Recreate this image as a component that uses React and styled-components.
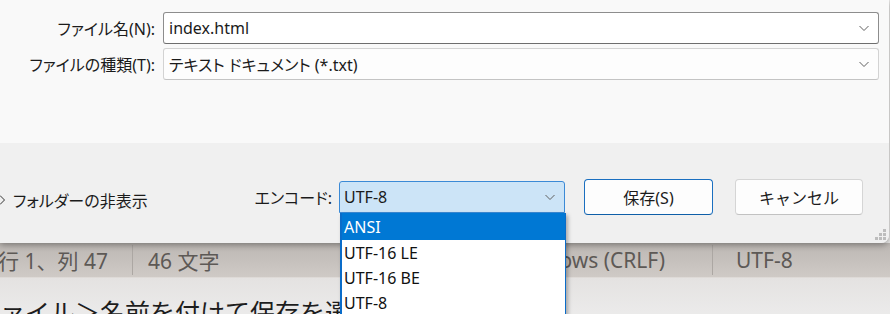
import React from 'react'
import styled, { createGlobalStyle } from 'styled-components'

const Global = createGlobalStyle`
    html, body {
        margin: 0;
        padding: 0;
        overflow: hidden;
    }
    body {
        font-family: "Noto Sans", "Noto Sans CJK JP", sans-serif;
        font-feature-settings: "palt";
    }
`

const Page = styled.div`
    position: relative;
    width: 890px;
    height: 314px;
    overflow: hidden;
    background: #ecebea;
`

const Dialog = styled.div`
    position: relative;
    z-index: 2;
    width: 889px;
    height: 243px;
    display: flex;
    flex-direction: column;
    border-bottom-right-radius: 8px;
    overflow: hidden;
    box-shadow: 0 2px 6px rgba(0, 0, 0, 0.35);
`

const FormArea = styled.div`
    height: 143px;
    box-sizing: border-box;
    padding-top: 12px;
    background-color: #f9f9f9;
    display: grid;
    grid-template-columns: 155px 716px;
    grid-auto-rows: 32px;
    column-gap: 8px;
    row-gap: 4px;
    align-content: start;
`

const Label = styled.label`
    justify-self: end;
    align-self: center;
    font-size: 16px;
    color: #1b1b1b;
    white-space: nowrap;
`

const Field = styled.div`
    display: flex;
    align-items: center;
    justify-content: space-between;
    box-sizing: border-box;
    padding: 0 8px 0 5px;
    font-size: 16px;
    color: #1b1b1b;
    border-radius: 3px;
    background: ${p => (p.$focused ? '#ffffff' : '#fdfdfd')};
    border: 1px solid ${p => (p.$focused ? '#8d8d8d' : '#d3d3d3')};
    border-bottom-color: ${p => (p.$focused ? '#6e6e6e' : '#c4c4c4')};
`

const Chevron = ({ color = '#606060' }) => (
    <svg width="12" height="12" viewBox="0 0 12 12">
        <path d="M1.5 4 L6 8.5 L10.5 4" fill="none" stroke={color} strokeWidth="1" />
    </svg>
)

const ActionBar = styled.div`
    flex: 1;
    box-sizing: border-box;
    padding: 8px 26px 0 0;
    background-color: #f0f0f0;
    display: flex;
    align-items: center;
`

const FolderToggle = styled.div`
    display: flex;
    align-items: center;
    gap: 5px;
    margin-left: -4px;
    margin-top: 6px;
    font-size: 16px;
    color: #1b1b1b;

    svg {
        transform: rotate(-90deg);
    }
`

const Encoding = styled.div`
    margin-left: auto;
    display: flex;
    align-items: center;
    gap: 7px;
    font-size: 16px;
    color: #1b1b1b;
`

const EncodingSelect = styled.div`
    width: 226px;
    height: 32px;
    box-sizing: border-box;
    padding: 0 8px 0 4px;
    display: flex;
    align-items: center;
    justify-content: space-between;
    background: #cce4f7;
    border: 1px solid #3b8ad6;
    border-radius: 3px 3px 0 0;
`

const Button = styled.button`
    width: ${p => p.$width}px;
    height: 36px;
    margin-left: ${p => p.$gap}px;
    font-family: inherit;
    font-size: 16px;
    color: #1b1b1b;
    background: #fdfdfd;
    border-radius: 4px;
    border: 1px solid ${p => (p.$primary ? '#1a6fc0' : '#d5d5d5')};
    border-bottom-color: ${p => (p.$primary ? '#0f5fa8' : '#c2c2c2')};
`

const Grip = styled.div`
    position: absolute;
    right: 3px;
    bottom: 3px;
    display: grid;
    grid-template-columns: repeat(3, 3px);
    gap: 1px;

    i {
        width: 3px;
        height: 3px;
        background: #bdbdbd;
    }
    i.off {
        background: transparent;
    }
`

const StatusBar = styled.div`
    height: 35px;
    box-sizing: border-box;
    display: flex;
    align-items: center;
    background: linear-gradient(#bcb7b3, #cfcac6);
    border-bottom: 1px solid #dedad7;
    font-family: "Noto Sans", "Noto Sans CJK JP", sans-serif;
    font-feature-settings: normal;
    font-size: 21px;
    color: #5d5956;
`

const Cell = styled.div`
    height: 30px;
    width: ${p => p.$width}px;
    flex-shrink: 0;
    box-sizing: border-box;
    display: flex;
    align-items: center;
    justify-content: ${p => (p.$right ? 'flex-end' : 'flex-start')};
    padding: ${p => p.$pad};
    margin-left: ${p => p.$offset || 0}px;
    border-right: ${p => (p.$sep ? '1px solid #aca7a3' : 'none')};
    white-space: nowrap;
`

const Editor = styled.div`
    height: 36px;
    background: linear-gradient(#e4e2e1, #efefef);
    padding-top: 18px;
    font-family: "Noto Sans CJK JP", sans-serif;
    font-feature-settings: normal;
    font-size: 25px;
    line-height: 30px;
    color: #1d1d1d;
    white-space: nowrap;
    text-indent: -25px;
`

const OptionList = styled.ul`
    position: absolute;
    z-index: 3;
    left: 340px;
    top: 213px;
    width: 226px;
    margin: 0;
    padding: 0;
    list-style: none;
    box-sizing: border-box;
    background: #ffffff;
    border: 1px solid #0a6cc9;
    border-top: none;
    border-left-width: 2px;
    box-shadow: 2px 2px 4px rgba(0, 0, 0, 0.3);
`

const Option = styled.li`
    height: ${p => (p.$active ? 27 : 25)}px;
    display: flex;
    align-items: center;
    padding-left: 2px;
    font-size: 16px;
    color: ${p => (p.$active ? '#ffffff' : '#111111')};
    background: ${p => (p.$active ? '#0078d4' : 'transparent')};
`

const encodings = ['ANSI', 'UTF-16 LE', 'UTF-16 BE', 'UTF-8']

const App = () => {
    return (
        <Page>
            <Global />
            <Dialog>
                <FormArea>
                    <Label>ファイル名(N):</Label>
                    <Field $focused>
                        <span>index.html</span>
                        <Chevron />
                    </Field>
                    <Label>ファイルの種類(T):</Label>
                    <Field>
                        <span>テキスト ドキュメント (*.txt)</span>
                        <Chevron />
                    </Field>
                </FormArea>
                <ActionBar>
                    <FolderToggle>
                        <Chevron color="#333" />
                        フォルダーの非表示
                    </FolderToggle>
                    <Encoding>
                        エンコード:
                        <EncodingSelect>
                            <span>UTF-8</span>
                            <Chevron />
                        </EncodingSelect>
                    </Encoding>
                    <Button $primary $width={129} $gap={19}>保存(S)</Button>
                    <Button $width={128} $gap={22}>キャンセル</Button>
                </ActionBar>
                <Grip>
                    <i className="off" /><i className="off" /><i />
                    <i className="off" /><i /><i />
                    <i /><i /><i />
                </Grip>
            </Dialog>
            <StatusBar>
                <Cell $width={135} $offset={-2} $sep>行 1、列 47</Cell>
                <Cell $width={150} $pad="0 0 0 15px">46 文字</Cell>
                <Cell $width={430} $right $pad="0 47px 0 0" $sep>Windows (CRLF)</Cell>
                <Cell $width={150} $pad="0 0 0 23px">UTF-8</Cell>
            </StatusBar>
            <Editor>ファイル＞名前を付けて保存を選択</Editor>
            <OptionList>
                {encodings.map((e, i) => (
                    <Option key={e} $active={i === 0}>{e}</Option>
                ))}
            </OptionList>
        </Page>
    )
}

export default App
